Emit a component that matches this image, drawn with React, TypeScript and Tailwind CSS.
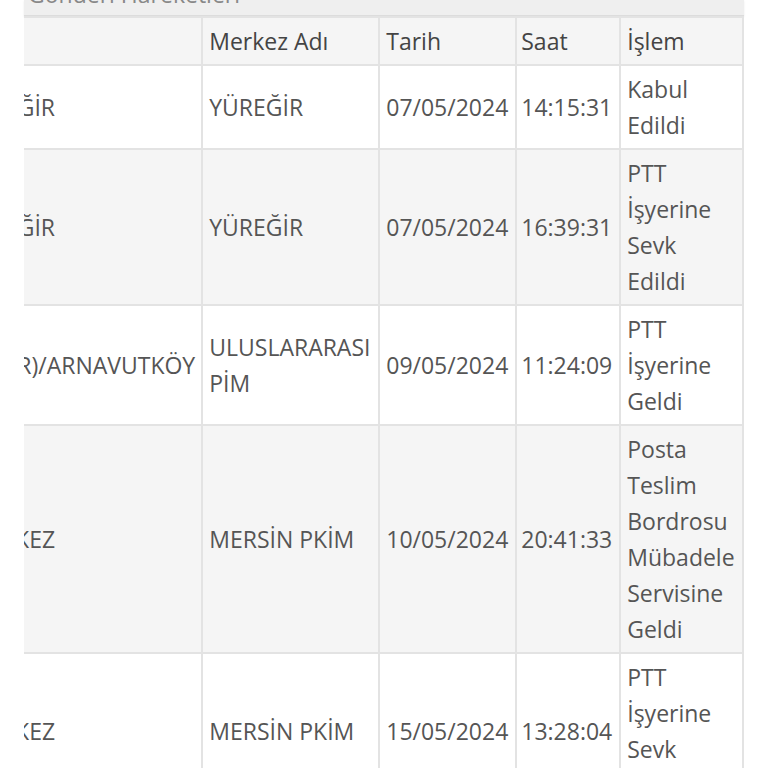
import { useLayoutEffect, useRef } from "react";

const ROWS = [
  { place: "ADANA/YÜREĞİR", center: "YÜREĞİR", date: "07/05/2024", time: "14:15:31", action: "Kabul Edildi" },
  { place: "ADANA/YÜREĞİR", center: "YÜREĞİR", date: "07/05/2024", time: "16:39:31", action: "PTT İşyerine Sevk Edildi" },
  { place: "İSTANBUL(AVR)/ARNAVUTKÖY", center: "ULUSLARARASI PİM", date: "09/05/2024", time: "11:24:09", action: "PTT İşyerine Geldi" },
  { place: "MERSİN/MERKEZ", center: "MERSİN PKİM", date: "10/05/2024", time: "20:41:33", action: "Posta Teslim Bordrosu Mübadele Servisine Geldi" },
  { place: "MERSİN/MERKEZ", center: "MERSİN PKİM", date: "15/05/2024", time: "13:28:04", action: "PTT İşyerine Sevk Edildi" },
];

export default function App() {
  const scroller = useRef<HTMLDivElement>(null);

  // the table is scrolled all the way to the right in the screenshot
  useLayoutEffect(() => {
    const el = scroller.current;
    if (el) el.scrollLeft = el.scrollWidth;
  }, []);

  return (
    <div className="h-[768px] overflow-hidden bg-white pl-[24px] pr-[24px] text-[#555] font-['Open_Sans',sans-serif] text-[23px] leading-[36px]">
      <div className="h-[16px] overflow-hidden bg-[#efefef] border-b border-[#dcdcdc] shadow-[0_1px_2px_rgba(0,0,0,0.08)]">
        <div className="-mt-[24px] pl-[4px] text-[#888]">Gönderi Hareketleri</div>
      </div>
      <div ref={scroller} className="overflow-hidden">
        <table className="w-max border-collapse">
          <thead>
            <tr className="bg-[#f5f5f5] text-[#444]">
              <th className="border-2 border-[#e3e3e3] border-l-0 px-[6px] py-[5px] text-left font-normal whitespace-nowrap">İl / İlçe</th>
              <th className="w-[177px] border-2 border-[#e3e3e3] px-[6px] py-[5px] text-left font-normal">Merkez Adı</th>
              <th className="w-[137px] border-2 border-[#e3e3e3] px-[6px] py-[5px] text-left font-normal">Tarih</th>
              <th className="w-[104px] border-2 border-[#e3e3e3] px-[4px] py-[5px] text-left font-normal">Saat</th>
              <th className="w-[123px] border-2 border-[#e3e3e3] px-[6px] py-[5px] text-left font-normal">İşlem</th>
            </tr>
          </thead>
          <tbody>
            {ROWS.map((r, i) => (
              <tr key={i} className={i % 2 === 1 ? "bg-[#f5f5f5]" : "bg-white"}>
                <td className="border-2 border-[#e3e3e3] border-l-0 px-[6px] py-[5px] align-middle whitespace-nowrap">{r.place}</td>
                <td className="border-2 border-[#e3e3e3] px-[6px] py-[5px] align-middle">{r.center}</td>
                <td className="border-2 border-[#e3e3e3] px-[6px] py-[5px] align-middle">{r.date}</td>
                <td className="border-2 border-[#e3e3e3] px-[4px] py-[5px] align-middle">{r.time}</td>
                <td className="border-2 border-[#e3e3e3] px-[6px] py-[5px] align-middle">{r.action}</td>
              </tr>
            ))}
          </tbody>
        </table>
      </div>
    </div>
  );
}
